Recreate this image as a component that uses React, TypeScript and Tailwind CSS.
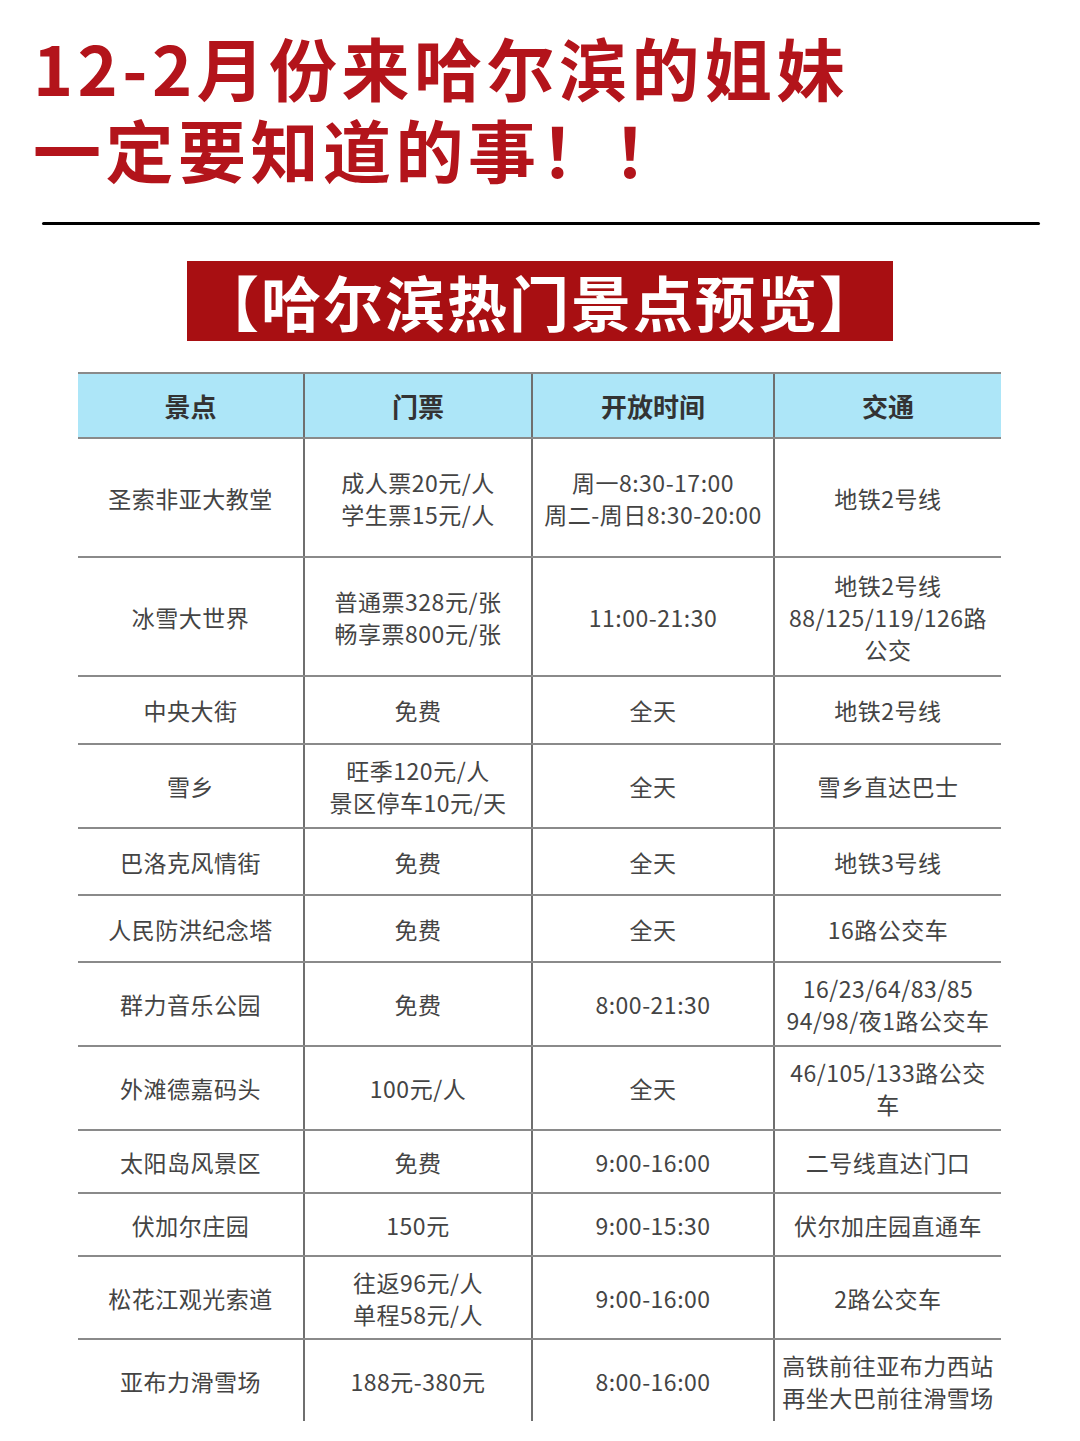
import React from 'react';

type Row = { name: string; ticket: string[]; time: string[]; traffic: string[]; h: string };

const rows: Row[] = [
  { name: '圣索非亚大教堂', ticket: ['成人票20元/人', '学生票15元/人'], time: ['周一8:30-17:00', '周二-周日8:30-20:00'], traffic: ['地铁2号线'], h: 'h-[119px]' },
  { name: '冰雪大世界', ticket: ['普通票328元/张', '畅享票800元/张'], time: ['11:00-21:30'], traffic: ['地铁2号线', '88/125/119/126路', '公交'], h: 'h-[119px]' },
  { name: '中央大街', ticket: ['免费'], time: ['全天'], traffic: ['地铁2号线'], h: 'h-[68px]' },
  { name: '雪乡', ticket: ['旺季120元/人', '景区停车10元/天'], time: ['全天'], traffic: ['雪乡直达巴士'], h: 'h-[84px]' },
  { name: '巴洛克风情街', ticket: ['免费'], time: ['全天'], traffic: ['地铁3号线'], h: 'h-[67px]' },
  { name: '人民防洪纪念塔', ticket: ['免费'], time: ['全天'], traffic: ['16路公交车'], h: 'h-[67px]' },
  { name: '群力音乐公园', ticket: ['免费'], time: ['8:00-21:30'], traffic: ['16/23/64/83/85', '94/98/夜1路公交车'], h: 'h-[84px]' },
  { name: '外滩德嘉码头', ticket: ['100元/人'], time: ['全天'], traffic: ['46/105/133路公交', '车'], h: 'h-[84px]' },
  { name: '太阳岛风景区', ticket: ['免费'], time: ['9:00-16:00'], traffic: ['二号线直达门口'], h: 'h-[63px]' },
  { name: '伏加尔庄园', ticket: ['150元'], time: ['9:00-15:30'], traffic: ['伏尔加庄园直通车'], h: 'h-[63px]' },
  { name: '松花江观光索道', ticket: ['往返96元/人', '单程58元/人'], time: ['9:00-16:00'], traffic: ['2路公交车'], h: 'h-[83px]' },
  { name: '亚布力滑雪场', ticket: ['188元-380元'], time: ['8:00-16:00'], traffic: ['高铁前往亚布力西站', '再坐大巴前往滑雪场'], h: 'h-[81px]' },
];

const cols = 'grid grid-cols-[227px_228px_242px_226px]';

function Cell({ lines, last }: { lines: string[]; last?: boolean }) {
  return (
    <div className={`flex flex-col items-center justify-center text-center leading-[32px] ${last ? '' : 'border-r-2 border-[#6f6f6f]'}`}>
      {lines.map((l, i) => (
        <span key={i}>{l}</span>
      ))}
    </div>
  );
}

export default function App() {
  return (
    <div className="w-[1080px] h-[1441px] overflow-hidden bg-white font-['Noto_Sans_CJK_SC',sans-serif]">
      <div className="pl-[33px] pt-[26px] text-[#b3141b] font-bold text-[68px] leading-[82px] tracking-[4.5px]">
        <div>12-2月份来哈尔滨的姐妹</div>
        <div>一定要知道的事！！</div>
      </div>
      <div className="ml-[42px] mr-[40px] mt-[32px] h-[3px] rounded-full bg-black" />
      <div className="flex justify-center mt-[36px]">
        <div className="w-[706px] h-[80px] bg-[#a80f12] flex items-center justify-center text-white font-bold text-[60px] leading-none tracking-[2px]">
          【哈尔滨热门景点预览】
        </div>
      </div>
      <div className="ml-[78px] mt-[31px] w-[923px]">
        <div className={`${cols} h-[67px] bg-[#ade6f8] border-t-2 border-b-2 border-[#8a8a8a] text-[#333] font-bold text-[26px]`}>
          {['景点', '门票', '开放时间', '交通'].map((t, i) => (
            <div key={t} className={`flex items-center justify-center ${i < 3 ? 'border-r-2 border-[#6f6f6f]' : ''}`}>
              {t}
            </div>
          ))}
        </div>
        {rows.map((r, i) => (
          <div
            key={r.name}
            className={`${cols} ${r.h} text-[#444] text-[23px] tracking-[0.5px] ${i < rows.length - 1 ? 'border-b-2 border-[#8a8a8a]' : ''}`}
          >
            <Cell lines={[r.name]} />
            <Cell lines={r.ticket} />
            <Cell lines={r.time} />
            <Cell lines={r.traffic} last />
          </div>
        ))}
      </div>
    </div>
  );
}
